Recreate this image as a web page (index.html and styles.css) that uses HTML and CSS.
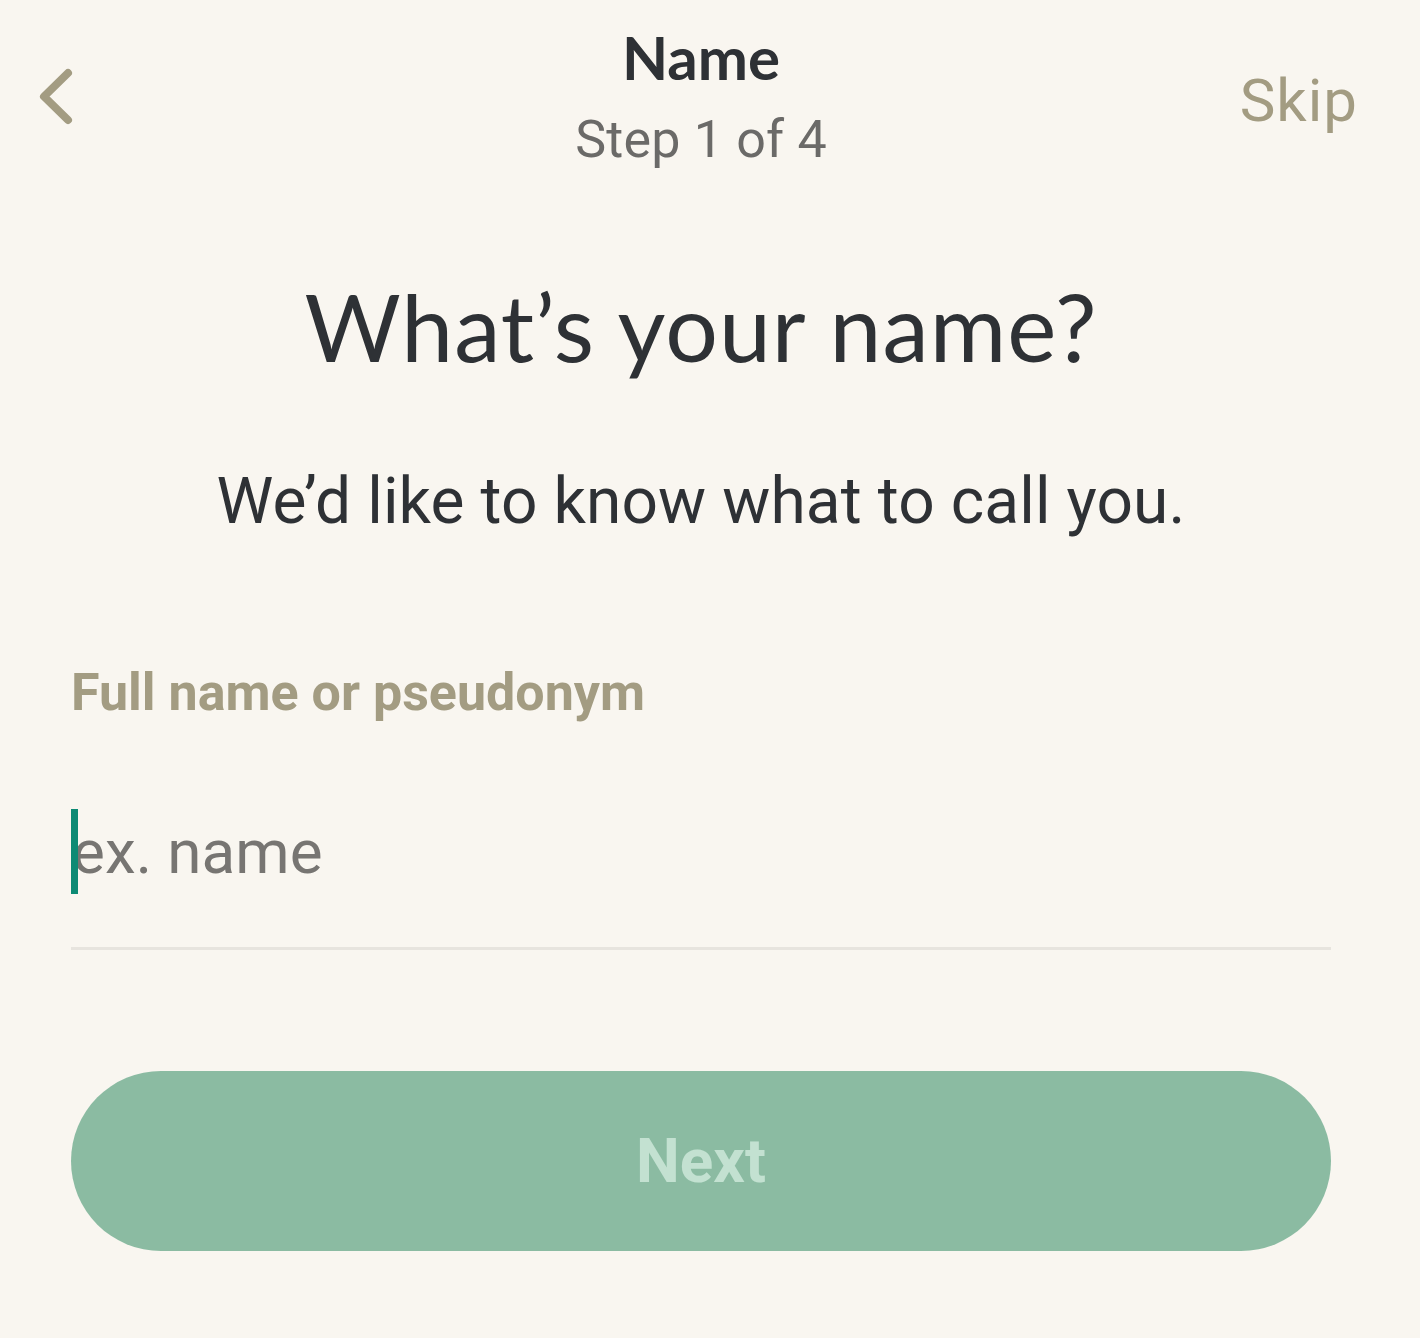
FILE: index.html
```
<!DOCTYPE html>
<html lang="en">
<head>
<meta charset="utf-8">
<title>Name - Step 1 of 4</title>
<link rel="stylesheet" href="styles.css">
</head>
<body>
<div class="screen">
  <header class="topbar">
    <button class="back" aria-label="Back">
      <svg width="36" height="60" viewBox="0 0 36 60"><path d="M30 7 L6 30.5 L30 54" fill="none" stroke="#a39c82" stroke-width="8" stroke-linecap="round" stroke-linejoin="round"/></svg>
    </button>
    <div class="titles">
      <div class="title">Name</div>
      <div class="step">Step 1 of 4</div>
    </div>
    <a class="skip">Skip</a>
  </header>
  <main class="content">
    <h1 class="heading">What’s your name?</h1>
    <p class="sub">We’d like to know what to call you.</p>
    <label class="label">Full name or pseudonym</label>
    <div class="field">
      <span class="caret"></span>
      <span class="placeholder">ex. name</span>
    </div>
    <button class="next">Next</button>
  </main>
</div>
</body>
</html>
```
FILE: styles.css
```
html, body {
  margin: 0;
  padding: 0;
  background: #f9f6f0;
}
.screen {
  width: 1402px;
  font-family: Roboto, "Liberation Sans", sans-serif;
}
.topbar {
  display: grid;
  grid-template-columns: 1fr auto 1fr;
  align-items: center;
  padding: 17px 44px 0 44px;
}
.back {
  justify-self: start;
  margin-left: -6px;
  background: none;
  border: 0;
  padding: 0;
  width: 36px;
  height: 60px;
  display: block;
}
.back svg { display: block; }
.titles {
  display: flex;
  flex-direction: column;
  align-items: center;
}
.title {
  font-family: Lato, "Open Sans", sans-serif;
  font-weight: 700;
  font-size: 60px;
  line-height: 80px;
  color: #2e3135;
}
.step {
  margin-top: 8px;
  font-size: 52px;
  line-height: 70px;
  color: #6b6a68;
  letter-spacing: 0.2px;
}
.skip {
  justify-self: end;
  align-self: start;
  margin-top: 44px;
  font-size: 60px;
  line-height: 80px;
  letter-spacing: 1px;
  color: #a39c82;
}
.content {
  padding: 0 71px;
  display: flex;
  flex-direction: column;
}
.heading {
  margin: 91px 0 0;
  text-align: center;
  font-family: Lato, "Open Sans", sans-serif;
  font-weight: 400;
  font-size: 93px;
  line-height: 120px;
  letter-spacing: 1px;
  color: #2e3135;
}
.sub {
  margin: 76px 0 0;
  text-align: center;
  font-size: 64px;
  line-height: 80px;
  letter-spacing: 0.1px;
  color: #2e3135;
}
.label {
  margin-top: 116px;
  font-size: 52px;
  line-height: 70px;
  font-weight: 700;
  color: #a39c82;
}
.field {
  position: relative;
  margin-top: 81px;
  padding-bottom: 53px;
  border-bottom: 3px solid #e7e4de;
  height: 85px;
}
.placeholder {
  display: block;
  padding-left: 1px;
  font-size: 62px;
  line-height: 85px;
  color: #777572;
}
.caret {
  position: absolute;
  left: 0;
  top: 0;
  width: 7px;
  height: 85px;
  background: #0d8a74;
}
.next {
  margin-top: 121px;
  height: 180px;
  border: 0;
  border-radius: 90px;
  background: #8bbba2;
  color: #c3e1d1;
  font-family: Roboto, "Liberation Sans", sans-serif;
  font-weight: 700;
  font-size: 62px;
  line-height: 180px;
  padding: 0;
}
```
